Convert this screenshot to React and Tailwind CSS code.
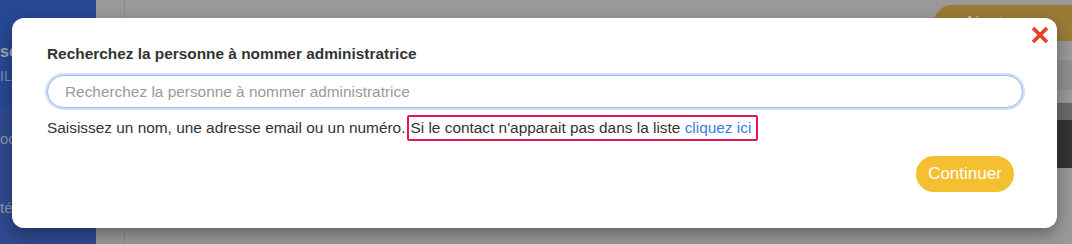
import React from "react";

export default function App() {
  return (
    <div className="relative w-[1072px] h-[244px] overflow-hidden bg-[#999999] font-['Liberation_Sans',Arial,sans-serif]">
      {/* dimmed background page */}
      <div className="flex h-full">
        <div className="w-[96px] h-full flex flex-col bg-[#284894]">
          <div className="h-[108px] flex flex-col justify-end pb-[22px]">
            <div className="text-[16px] font-bold text-[#a3a9b8] leading-[20px]">sc</div>
            <div className="text-[14px] text-[#7d8bb0] leading-[20px] mt-[4px]">IL</div>
          </div>
          <div className="flex-1 bg-[#2f4a8e] flex flex-col">
            <div className="text-[15px] text-[#8e97b0] mt-[20px]">oc</div>
            <div className="text-[15px] text-[#8e97b0] mt-[46px]">té</div>
          </div>
        </div>
        <div className="flex-1 flex h-full">
          <div className="w-[29px] h-full border-r border-[#8a8a8a]" />
          <div className="flex-1 flex flex-col">
            <div className="flex justify-end pt-[5px]">
              <div className="h-[36px] w-[138px] rounded-l-full bg-[#9a7b36] text-[#c9c3b2] text-[17px] leading-[36px] pl-[30px] whitespace-nowrap">Ajouter</div>
            </div>
            <div className="flex justify-end mt-[19px]">
              <div className="h-[30px] w-[40px] bg-[#8f8f8f] text-[16px] text-[#444] leading-[30px] pl-[1px] whitespace-nowrap">urs</div>
            </div>
            <div className="flex justify-end mt-[13px]">
              <div className="h-[17px] w-[40px] bg-[#6a6a6a]" />
            </div>
            <div className="flex justify-end">
              <div className="h-[48px] w-[40px] bg-[#333333] text-[17px] text-[#9a9a9a] leading-[48px] pl-[1px] whitespace-nowrap">fil</div>
            </div>
          </div>
        </div>
      </div>

      {/* modal */}
      <div className="absolute left-[12px] top-[18px] w-[1045px] h-[210px] rounded-[12px] bg-white shadow-[0_6px_16px_rgba(0,0,0,0.35)] px-[35px] pt-[26px] flex flex-col">
        <button className="absolute right-[7px] top-[7px] w-[20px] h-[20px] flex items-center justify-center">
          <svg width="20" height="20" viewBox="0 0 20 20">
            <path d="M3 3 L17 17 M17 3 L3 17" stroke="#e4412c" strokeWidth="3.8" strokeLinecap="butt" />
          </svg>
        </button>
        <div className="text-[15.4px] leading-[20px] font-bold text-[#333]">Recherchez la personne à nommer administratrice</div>
        <input
          className="mt-[11px] h-[33px] w-[976px] rounded-full border border-[#9cb6f0] ring-[2px] ring-[#d3def9] outline-none px-[17px] text-[15.4px] text-[#333] placeholder:text-[#9a9a9a] bg-white"
          placeholder="Recherchez la personne à nommer administratrice"
        />
        <div className="mt-[7px] flex items-center text-[15.4px] leading-[20px] text-[#333]">
          <span>Saisissez un nom, une adresse email ou un numéro.</span>
          <span className="ml-[2px] border-2 border-[#e0184e] rounded-[2px] pl-[1px] pr-[5px] py-[1px]">
            Si le contact n'apparait pas dans la liste <a className="text-[#3c7be6]">cliquez ici</a>
          </span>
        </div>
        <div className="mt-[15px] flex justify-end pr-[8px]">
          <button className="h-[36px] w-[98px] rounded-full bg-[#f4c031] text-white text-[17px]">Continuer</button>
        </div>
      </div>
    </div>
  );
}
